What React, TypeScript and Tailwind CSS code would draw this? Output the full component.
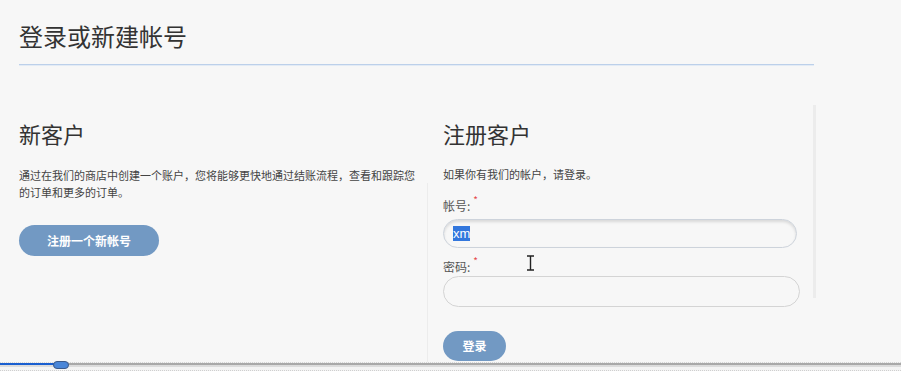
const cjk = "font-['Noto_Sans_CJK_SC','Liberation_Sans',sans-serif]";

function Label({ text }: { text: string }) {
  return (
    <div className="flex items-start h-[16px] text-[12px] leading-[16px] text-[#555]">
      <span>{text}</span>
      <span className="ml-[3px] -mt-[6px] text-[10px] text-[#e5484d]">*</span>
    </div>
  );
}

function Cursor() {
  // the I-beam mouse pointer in the capture
  return (
    <svg
      className="absolute left-[526px] top-[255px]"
      width="9"
      height="16"
      viewBox="0 0 9 16"
    >
      <path
        d="M1 1h7M1 15h7M4.5 1v14"
        stroke="#222"
        strokeWidth="1.4"
        fill="none"
      />
    </svg>
  );
}

function Scrubber() {
  return (
    <div className="relative h-[9px] shrink-0 border-t border-dotted border-[#d6d6d6] bg-[#f4f4f4]">
      <div className="h-[2px] bg-[#a9a9a9]" />
      <div className="h-[2px] bg-[#dcdcdc]" />
      <div className="absolute left-0 top-0 h-[2px] w-[56px] bg-[#1a5fd0]" />
      <div className="absolute left-[53px] -top-[2px] h-[8px] w-[16px] rounded-[4px] border border-[#3c5a8a] bg-[#4a86d8]" />
      <div className="absolute left-0 right-0 bottom-0 border-b border-dotted border-[#cfcfcf]" />
    </div>
  );
}

export default function App() {
  return (
    <div className={`relative flex h-[371px] w-[901px] flex-col overflow-hidden bg-[#f7f7f7] ${cjk}`}>
      <div className="flex min-h-0 flex-1 flex-col px-[19px] pt-[20px]">
        <h1 className="text-[24px] leading-[32px] font-normal text-[#333]">
          登录或新建帐号
        </h1>
        <div className="mt-[12px] h-[2px] w-[795px] border-t border-[#bcd0ea] bg-[#e3ebf5]" />

        <div className="mt-[52px] flex min-h-0 flex-1">
          <div className="w-[408px] shrink-0">
            <h2 className="text-[22px] leading-[30px] font-normal text-[#333]">
              新客户
            </h2>
            <p className="mt-[19px] w-[400px] text-[11px] leading-[17px] text-[#444]">
              通过在我们的商店中创建一个账户，您将能够更快地通过结账流程，查看和跟踪您的订单和更多的订单。
            </p>
            <button className="mt-[24px] h-[31px] w-[140px] rounded-full bg-[#7299c3] text-[12px] font-bold text-white">
              注册一个新帐号
            </button>
          </div>

          <div className="flex w-[386px] shrink-0 flex-col">
            <div className="pl-[16px]">
              <h2 className="text-[22px] leading-[30px] font-normal text-[#333]">
                注册客户
              </h2>
              <p className="mt-[18px] text-[11px] leading-[17px] text-[#444]">
                如果你有我们的帐户，请登录。
              </p>
            </div>
            <div className="flex-1 border-l border-[#ececec] pl-[15px] pt-[15px]">
              <Label text="帐号:" />
              <div className="mt-[5px] flex h-[29px] w-[354px] items-center rounded-full border border-[#cdd3db] bg-[#f7f7f7] px-[9px] shadow-[inset_0_2px_3px_rgba(0,0,0,0.12)]">
                <span className="bg-[#3377dd] text-[13px] leading-[15px] text-white font-['Liberation_Sans',sans-serif]">
                  xm
                </span>
              </div>
              <div className="mt-[11px]">
                <Label text="密码:" />
              </div>
              <div className="mt-[1px] h-[31px] w-[357px] rounded-full border border-[#d4d4d4] bg-[#f7f7f7]" />
              <button className="mt-[24px] h-[30px] w-[63px] rounded-full bg-[#7299c3] text-[12px] font-bold text-white">
                登录
              </button>
            </div>
          </div>

          <div className="-mt-[13px] h-[193px] w-[3px] shrink-0 self-start bg-[#ececec]" />
        </div>
      </div>
      <Scrubber />
      <Cursor />
    </div>
  );
}
